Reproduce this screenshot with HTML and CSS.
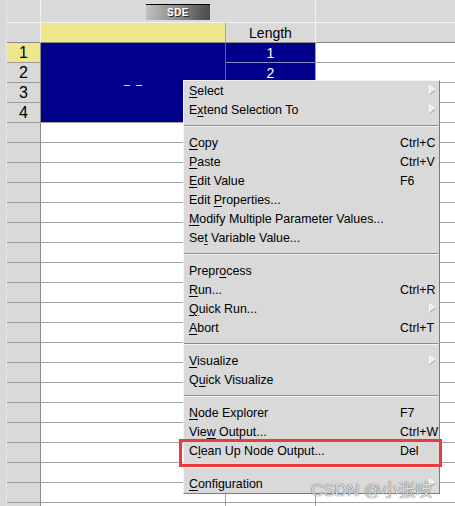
FILE: index.html
```html
<!DOCTYPE html>
<html>
<head>
<meta charset="utf-8">
<link rel="stylesheet" href="styles.css">
</head>
<body>
<div class="sheet">
  <div class="grid">
    <div class="c rh h1"></div>
    <div class="c grp h1"><span class="sde">SDE</span></div>
    <div class="c h1 last"></div>

    <div class="c rh h2"></div>
    <div class="c colsel h2"></div>
    <div class="c hdr h2">Length</div>
    <div class="c h2 last"></div>

    <div class="c rh sel">1</div>
    <div class="c blk"><span class="dash">– –</span></div>
    <div class="c bl">1</div>
    <div class="c w last"></div>

    <div class="c rh">2</div>
    <div class="c bl">2</div>
    <div class="c w last"></div>

    <div class="c rh">3</div>
    <div class="c bl"></div>
    <div class="c w last"></div>

    <div class="c rh">4</div>
    <div class="c bl"></div>
    <div class="c w last"></div>

    <div class="c rh"></div><div class="c w"></div><div class="c w"></div><div class="c w last"></div>
    <div class="c rh"></div><div class="c w"></div><div class="c w"></div><div class="c w last"></div>
    <div class="c rh"></div><div class="c w"></div><div class="c w"></div><div class="c w last"></div>
    <div class="c rh"></div><div class="c w"></div><div class="c w"></div><div class="c w last"></div>
    <div class="c rh"></div><div class="c w"></div><div class="c w"></div><div class="c w last"></div>
    <div class="c rh"></div><div class="c w"></div><div class="c w"></div><div class="c w last"></div>
    <div class="c rh"></div><div class="c w"></div><div class="c w"></div><div class="c w last"></div>
    <div class="c rh"></div><div class="c w"></div><div class="c w"></div><div class="c w last"></div>
    <div class="c rh"></div><div class="c w"></div><div class="c w"></div><div class="c w last"></div>
    <div class="c rh"></div><div class="c w"></div><div class="c w"></div><div class="c w last"></div>
    <div class="c rh"></div><div class="c w"></div><div class="c w"></div><div class="c w last"></div>
    <div class="c rh"></div><div class="c w"></div><div class="c w"></div><div class="c w last"></div>
    <div class="c rh"></div><div class="c w"></div><div class="c w"></div><div class="c w last"></div>
    <div class="c rh"></div><div class="c w"></div><div class="c w"></div><div class="c w last"></div>
    <div class="c rh"></div><div class="c w"></div><div class="c w"></div><div class="c w last"></div>
    <div class="c rh"></div><div class="c w"></div><div class="c w"></div><div class="c w last"></div>
    <div class="c rh"></div><div class="c w"></div><div class="c w"></div><div class="c w last"></div>
    <div class="c rh"></div><div class="c w"></div><div class="c w"></div><div class="c w last"></div>
    <div class="c rh"></div><div class="c w"></div><div class="c w"></div><div class="c w last"></div>
    <div class="c rh"></div><div class="c w"></div><div class="c w"></div><div class="c w last"></div>
  </div>

  <div class="menu">
    <div class="mi"><span class="lb"><u>S</u>elect</span><span class="ac"></span><svg class="arr" width="7" height="10" viewBox="0 0 7 10"><polygon points="0.5,0.5 6.5,5 0.5,9.5" fill="#ececec"/><polyline points="0.5,9.5 0.5,0.5 6.5,5" fill="none" stroke="#fafafa" stroke-width="1"/><line x1="0.5" y1="9.5" x2="6.5" y2="5" stroke="#9a9a9a" stroke-width="1"/></svg></div>
    <div class="mi"><span class="lb">E<u>x</u>tend Selection To</span><span class="ac"></span><svg class="arr" width="7" height="10" viewBox="0 0 7 10"><polygon points="0.5,0.5 6.5,5 0.5,9.5" fill="#ececec"/><polyline points="0.5,9.5 0.5,0.5 6.5,5" fill="none" stroke="#fafafa" stroke-width="1"/><line x1="0.5" y1="9.5" x2="6.5" y2="5" stroke="#9a9a9a" stroke-width="1"/></svg></div>
    <div class="sep"></div>
    <div class="mi"><span class="lb"><u>C</u>opy</span><span class="ac">Ctrl+C</span></div>
    <div class="mi"><span class="lb"><u>P</u>aste</span><span class="ac">Ctrl+V</span></div>
    <div class="mi"><span class="lb"><u>E</u>dit Value</span><span class="ac">F6</span></div>
    <div class="mi"><span class="lb">Edit <u>P</u>roperties...</span><span class="ac"></span></div>
    <div class="mi"><span class="lb"><u>M</u>odify Multiple Parameter Values...</span><span class="ac"></span></div>
    <div class="mi"><span class="lb">Se<u>t</u> Variable Value...</span><span class="ac"></span></div>
    <div class="sep"></div>
    <div class="mi"><span class="lb">Prepr<u>o</u>cess</span><span class="ac"></span></div>
    <div class="mi"><span class="lb"><u>R</u>un...</span><span class="ac">Ctrl+R</span></div>
    <div class="mi"><span class="lb"><u>Q</u>uick Run...</span><span class="ac"></span><svg class="arr" width="7" height="10" viewBox="0 0 7 10"><polygon points="0.5,0.5 6.5,5 0.5,9.5" fill="#ececec"/><polyline points="0.5,9.5 0.5,0.5 6.5,5" fill="none" stroke="#fafafa" stroke-width="1"/><line x1="0.5" y1="9.5" x2="6.5" y2="5" stroke="#9a9a9a" stroke-width="1"/></svg></div>
    <div class="mi"><span class="lb"><u>A</u>bort</span><span class="ac">Ctrl+T</span></div>
    <div class="sep"></div>
    <div class="mi"><span class="lb"><u>V</u>isualize</span><span class="ac"></span><svg class="arr" width="7" height="10" viewBox="0 0 7 10"><polygon points="0.5,0.5 6.5,5 0.5,9.5" fill="#ececec"/><polyline points="0.5,9.5 0.5,0.5 6.5,5" fill="none" stroke="#fafafa" stroke-width="1"/><line x1="0.5" y1="9.5" x2="6.5" y2="5" stroke="#9a9a9a" stroke-width="1"/></svg></div>
    <div class="mi"><span class="lb">Q<u>u</u>ick Visualize</span><span class="ac"></span></div>
    <div class="sep"></div>
    <div class="mi"><span class="lb"><u>N</u>ode Explorer</span><span class="ac">F7</span></div>
    <div class="mi"><span class="lb">Vie<u>w</u> Output...</span><span class="ac">Ctrl+W</span></div>
    <div class="mi"><span class="lb">C<u>l</u>ean Up Node Output...</span><span class="ac">Del</span></div>
    <div class="sep"></div>
    <div class="mi"><span class="lb"><u>C</u>onfiguration</span><span class="ac"></span><svg class="arr" width="7" height="10" viewBox="0 0 7 10"><polygon points="0.5,0.5 6.5,5 0.5,9.5" fill="#ececec"/><polyline points="0.5,9.5 0.5,0.5 6.5,5" fill="none" stroke="#fafafa" stroke-width="1"/><line x1="0.5" y1="9.5" x2="6.5" y2="5" stroke="#9a9a9a" stroke-width="1"/></svg></div>
  </div>

  <div class="redbox"></div>
  <div class="wm">CSDN @小张吱</div>
</div>
</body>
</html>
```

FILE: styles.css
```css
html, body {
  margin: 0;
  padding: 0;
}
body {
  background: #d9d9d9;
  font-family: "Liberation Sans", Arial, sans-serif;
  width: 455px;
  height: 506px;
  overflow: hidden;
}
.sheet {
  position: relative;
  width: 455px;
  height: 506px;
  overflow: hidden;
  box-sizing: border-box;
  padding-left: 6px;
}
.grid {
  border-left: 1px solid #e6e6e6;
  display: grid;
  grid-template-columns: 34px 185px 90px 139px;
  grid-template-rows: 23px 20px repeat(24, 20px);
}
.c {
  box-sizing: border-box;
  border-right: 1px solid #a2a2a2;
  border-bottom: 1px solid #a2a2a2;
  display: flex;
  align-items: center;
  justify-content: center;
  color: #000;
  overflow: hidden;
}
.rh {
  background: #d9d9d9;
  border-right-color: #8a8a8a;
  border-bottom-color: #9c9c9c;
  font-size: 16px;
}
.rh.sel {
  background: #f0e68c;
}
.h1 {
  background: #d9d9d9;
  border-bottom-color: #f2f2f2;
  border-right-color: #f2f2f2;
}
.h2 {
  background: #d9d9d9;
  border-bottom-color: #8a8a8a;
  border-right-color: #f2f2f2;
}
.grp {
  grid-column: span 2;
}
.colsel {
  background: #f0e68c;
  border-right-color: #a2a2a2;
}
.hdr {
  font-size: 14px;
  padding-top: 1px;
}
.last {
  border-right: none;
}
.w {
  background: #fff;
}
.blk {
  grid-row: span 4;
  background: #00008b;
  color: #fff;
  border-right-color: #5a5aa8;
  border-bottom-color: #a2a2a2;
}
.dash {
  font-size: 11px;
  word-spacing: 3px;
  margin-top: 3px;
}
.bl {
  background: #00008b;
  color: #fff;
  font-size: 14px;
  border-bottom-color: #8a8ac6;
  border-right-color: #a2a2a2;
}
.sde {
  display: block;
  width: 64px;
  height: 15px;
  margin-top: 1px;
  border-top: 1px solid #000;
  background: linear-gradient(100deg, #c4c4c4 0%, #9e9e9e 30%, #8a8a8a 55%, #606060 80%, #4a4a4a 100%);
  color: #fff;
  font-size: 10px;
  font-weight: bold;
  line-height: 15px;
  text-align: center;
  letter-spacing: 0.5px;
  text-shadow: 1px 1px 0 #2a2a2a;
}

/* context menu */
.menu {
  position: absolute;
  left: 183px;
  top: 80px;
  width: 257px;
  box-sizing: border-box;
  background: #d9d9d9;
  border: 1px solid;
  border-color: #f2f2f2 #7c7c7c #7c7c7c #f2f2f2;
  display: flex;
  flex-direction: column;
}
.mi {
  position: relative;
  height: 19px;
  display: flex;
  align-items: center;
  padding-left: 5px;
  padding-right: 3px;
  font-size: 12.4px;
  color: #000;
  white-space: nowrap;
}
.lb {
  flex: 1;
}
.ac {
  width: 36px;
}
.mi u {
  text-decoration: underline;
  text-decoration-thickness: 1px;
  text-underline-offset: 1.5px;
}
.arr {
  position: absolute;
  right: 3px;
  top: 4px;
}
.sep {
  height: 14px;
  box-sizing: border-box;
  padding-top: 6px;
  margin-right: 1px;
}
.sep::before {
  content: "";
  display: block;
  height: 1px;
  background: #8c8c8c;
  border-bottom: 1px solid #f2f2f2;
}

.redbox {
  position: absolute;
  left: 179px;
  top: 439px;
  width: 263px;
  height: 28px;
  box-sizing: border-box;
  border: 3px solid #ea3b3b;
}
.wm {
  position: absolute;
  left: 311px;
  top: 476px;
  font-family: "Liberation Sans", "Noto Sans CJK SC", sans-serif;
  font-size: 17px;
  color: rgba(232, 232, 232, 0.95);
  text-shadow: 0 0 1px rgba(60, 60, 60, 0.8), 0 0 1px rgba(60, 60, 60, 0.5);
  white-space: nowrap;
}
```
